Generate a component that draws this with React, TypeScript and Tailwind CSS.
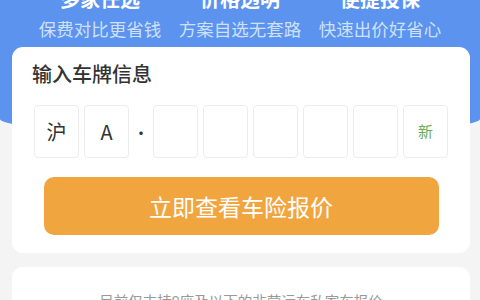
/** Car insurance quote entry — blue banner with plate input card. */

const features = [
  { title: "多家任选", sub: "保费对比更省钱" },
  { title: "价格透明", sub: "方案自选无套路" },
  { title: "便捷投保", sub: "快速出价好省心" },
]

function PlateBox({ children, green }: { children?: React.ReactNode; green?: boolean }) {
  return (
    <div
      className={`flex h-[53px] w-[45px] items-center justify-center rounded-[4px] border border-[#ececec] bg-white ${
        green ? "text-[15px] text-[#6cae55]" : "text-[20px] text-[#333]"
      }`}
    >
      {children}
    </div>
  )
}

export default function App() {
  return (
    <div className="min-h-screen overflow-hidden bg-[#f4f4f4] font-['Noto_Sans_CJK_SC','Noto_Sans',sans-serif]">
      <div className="flex h-[135px] flex-col rounded-b-[50%_16px] bg-[#5b93ee]">
        <div className="-mt-[15px] grid grid-cols-3 px-[30px] text-center">
          {features.map((f) => (
            <div key={f.title} className="flex flex-col items-center gap-[4px]">
              <span className="text-[20px] leading-[28px] font-bold text-white">{f.title}</span>
              <span className="text-[17.5px] leading-[24px] text-[#cfe0fb]">{f.sub}</span>
            </div>
          ))}
        </div>
      </div>

      <div className="-mt-[88px] flex flex-col gap-[14px] pr-[10px] pl-[12px]">
        <section className="rounded-[11px] bg-white px-[22px] pt-[14px] pb-[18px]">
          <h2 className="-ml-[2px] text-[20px] leading-[26px] font-medium text-[#333]">输入车牌信息</h2>
          <div className="mt-[18px] flex items-center">
            <div className="flex gap-[5px]">
              <PlateBox>沪</PlateBox>
              <PlateBox>A</PlateBox>
            </div>
            <div className="flex w-[25px] justify-center text-[16px] text-[#333]">·</div>
            <div className="flex gap-[5px]">
              <PlateBox />
              <PlateBox />
              <PlateBox />
              <PlateBox />
              <PlateBox />
              <PlateBox green>新</PlateBox>
            </div>
          </div>
          <button className="mx-auto mt-[19px] flex h-[58px] w-[395px] items-center justify-center rounded-[10px] bg-[#f1a53f] text-[23px] text-white">
            立即查看车险报价
          </button>
        </section>

        <section className="rounded-[11px] bg-white px-[22px] pt-[24px] pb-[20px]">
          <p className="text-center text-[14.5px] leading-[20px] text-[#999]">
            目前仅支持9座及以下的非营运车私家车报价
          </p>
        </section>
      </div>
    </div>
  )
}
